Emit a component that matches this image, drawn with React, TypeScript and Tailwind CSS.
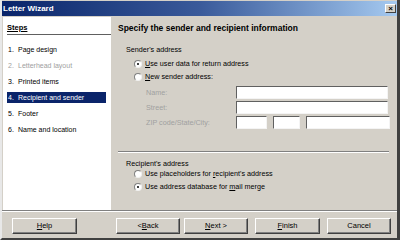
import React from 'react'

const font = { fontFamily: '"Liberation Sans", Arial, sans-serif' }

const Radio = ({ checked }: { checked?: boolean }) => (
  <span className="relative inline-block w-[8px] h-[8px] rounded-full bg-white border border-t-[#808080] border-l-[#808080] border-b-[#f0f0f0] border-r-[#f0f0f0] shrink-0">
    {checked && <span className="absolute left-[2px] top-[2px] w-[2px] h-[2px] rounded-full bg-black" />}
  </span>
)

const Field = ({ w }: { w: string }) => (
  <div className={`${w} h-[13px] bg-white border border-t-[#606060] border-l-[#606060] border-b-[#f4f4f4] border-r-[#f4f4f4]`} />
)

const Button = ({ children, w }: { children: React.ReactNode; w: string }) => (
  <div className={`${w} h-[16px] flex items-center justify-center text-[7.5px] text-black border border-t-white border-l-white border-b-[#404040] border-r-[#404040] shadow-[inset_-1px_-1px_0_#808080]`}>
    {children}
  </div>
)

const steps = ['Page design', 'Letterhead layout', 'Printed items', 'Recipient and sender', 'Footer', 'Name and location']

export default function App() {
  return (
    <div style={font} className="w-[400px] h-[240px] bg-[#d4d0c8] flex flex-col border-r-[3px] border-b-[2px] border-l-[2px] border-r-[#404040] border-b-[#404040] border-l-[#e8e8e8] overflow-hidden">
      <div className="h-[15px] mt-[1px] flex items-center justify-between bg-gradient-to-r from-[#0a246a] via-[#3a5a9a] to-[#a6caf0] pl-[1px] pr-[1px]">
        <span className="text-white font-bold text-[8px] leading-none">Letter Wizard</span>
        <div className="w-[11px] h-[9px] bg-[#d4d0c8] border border-t-white border-l-white border-b-[#404040] border-r-[#404040] flex items-center justify-center text-[8px] font-bold leading-none text-black">×</div>
      </div>
      <div className="flex h-[194px]">
        <div className="w-[108px] ml-[1px] mt-[1px] bg-white flex flex-col">
          <div className="ml-[4px] mt-[6px] text-[7.5px] font-bold underline leading-[10px]">Steps</div>
          <div className="ml-[4px] h-px bg-[#606060] mt-[1px]" />
          <div className="mt-[6px] flex flex-col">
            {steps.map((s, i) => (
              <div key={s} className="h-[16px] flex items-center">
                <div className={`ml-[4px] w-[99px] h-[11px] flex items-center text-[7px] leading-none ${i === 3 ? 'bg-[#0a246a] text-white' : i === 1 ? 'text-[#a0a0a0]' : 'text-black'}`}>
                  <span className="w-[11px] pl-[1px]">{i + 1}.</span>
                  <span>{s}</span>
                </div>
              </div>
            ))}
          </div>
        </div>
        <div className="flex-1 flex flex-col text-[7.2px] leading-none">
          <div className="ml-[7px] mt-[8px] font-bold text-[8.5px]">Specify the sender and recipient information</div>
          <div className="ml-[15px] mt-[13px]">Sender's address</div>
          <div className="ml-[23px] mt-[7px] flex items-center gap-[3px]">
            <Radio checked />
            <span><u>U</u>se user data for return address</span>
          </div>
          <div className="ml-[23px] mt-[5px] flex items-center gap-[3px]">
            <Radio />
            <span><u>N</u>ew sender address:</span>
          </div>
          <div className="ml-[35px] mt-[5px] flex items-center text-[#a0a0a0]">
            <span className="w-[90px]">Name:</span>
            <Field w="w-[152px]" />
          </div>
          <div className="ml-[35px] mt-[2px] flex items-center text-[#a0a0a0]">
            <span className="w-[90px]">Street:</span>
            <Field w="w-[152px]" />
          </div>
          <div className="ml-[35px] mt-[2px] flex items-center text-[#a0a0a0]">
            <span className="w-[90px]">ZIP code/State/City:</span>
            <Field w="w-[31px]" />
            <div className="w-[6px]" />
            <Field w="w-[27px]" />
            <div className="w-[6px]" />
            <Field w="w-[84px]" />
          </div>
          <div className="ml-[7px] mr-[8px] mt-[22px] h-[2px] border-t border-t-[#808080] border-b border-b-white" />
          <div className="ml-[15px] mt-[7px]">Recipient's address</div>
          <div className="ml-[23px] mt-[3px] flex items-center gap-[3px]">
            <Radio />
            <span>Use placeholders for <u>r</u>ecipient's address</span>
          </div>
          <div className="ml-[23px] mt-[5px] flex items-center gap-[3px]">
            <Radio checked />
            <span>Use address database for <u>m</u>ail merge</span>
          </div>
        </div>
      </div>
      <div className="h-[2px] border-t border-t-[#808080] border-b border-b-white" />
      <div className="flex mt-[6px]">
        <div className="ml-[10px]"><Button w="w-[65px]"><u>H</u>elp</Button></div>
        <div className="ml-[39px]"><Button w="w-[64px]">&lt; <u>B</u>ack</Button></div>
        <div className="ml-[4px]"><Button w="w-[64px]"><u>N</u>ext &gt;</Button></div>
        <div className="ml-[7px]"><Button w="w-[65px]"><u>F</u>inish</Button></div>
        <div className="ml-[7px]"><Button w="w-[64px]">Cancel</Button></div>
      </div>
    </div>
  )
}
